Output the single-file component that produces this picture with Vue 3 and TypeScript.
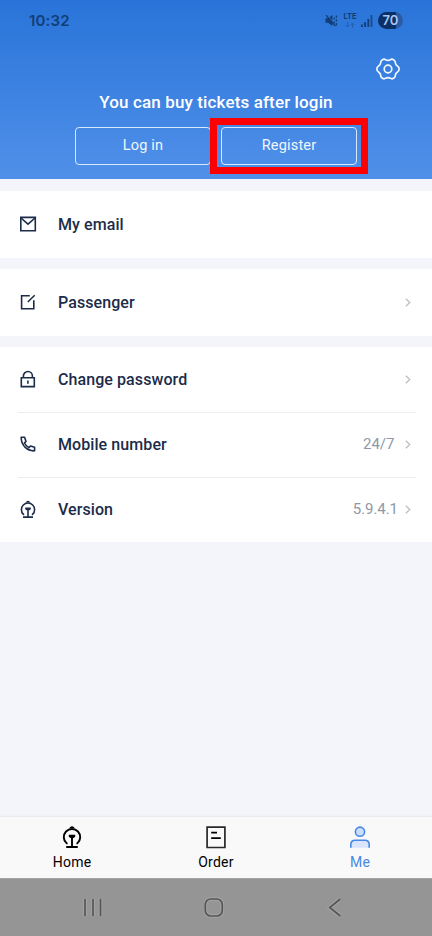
<script setup lang="ts">
import { ref } from 'vue'

type IconName = 'mail' | 'passenger' | 'lock' | 'phone' | 'train'

interface MenuItem {
  icon: IconName
  label: string
  value?: string
  arrow: boolean
}

const groups: MenuItem[][] = [
  [{ icon: 'mail', label: 'My email', arrow: false }],
  [{ icon: 'passenger', label: 'Passenger', arrow: true }],
  [
    { icon: 'lock', label: 'Change password', arrow: true },
    { icon: 'phone', label: 'Mobile number', value: '24/7 ', arrow: true },
    { icon: 'train', label: 'Version', value: '5.9.4.1', arrow: true },
  ],
]

const tabs = ['Home', 'Order', 'Me'] as const
const active = ref<(typeof tabs)[number]>('Me')
</script>

<template>
  <div class="screen">
    <header class="header">
      <div class="status">
        <span class="clock">10:32</span>
        <div class="indicators">
          <svg class="mute" width="13" height="13" viewBox="0 0 13 13">
            <path d="M.5 4.3h2.6L7.4 1v11L3.1 8.7H.5z" fill="currentColor" />
            <path d="M1.8 .6l9.4 11" stroke="#2d73d8" stroke-width="1" />
            <path d="M1 1.2l9.4 11M9.2 3.6v2M9.2 7.4v2M11.4 1.4v2.4M11.4 5.3v2.2M11.4 9v2.6" stroke="currentColor" stroke-width="1.3" fill="none" />
          </svg>
          <div class="lte">
            <span>LTE</span>
            <svg width="10" height="6" viewBox="0 0 10 6" fill="none" stroke="currentColor">
              <path d="M2.5 0v5M.5 3l2 2 2-2M7.5 6V1M5.5 3l2-2 2 2" />
            </svg>
          </div>
          <svg class="signal" width="12" height="12" viewBox="0 0 12 12" fill="currentColor">
            <path d="M0 9.5h1.8V12H0zM3.2 7H5v5H3.2zM6.4 4h1.8v8H6.4z" />
            <path d="M9.6 0h1.8v12H9.6z" opacity=".75" />
          </svg>
          <span class="battery">70</span>
        </div>
      </div>
      <svg class="settings" width="24" height="22" viewBox="0 0 24 22" fill="none" stroke="#f1f8ff" stroke-width="1.7" stroke-linejoin="round">
        <path d="M7.4 1.3Q8.6 1 9.6 1.8Q12 3 14.4 1.8Q15.4 1 16.6 1.3L18.5 2.5Q19.3 3.3 19.3 4.6Q19.5 6.9 21.5 8.1Q22.7 8.9 23 10V12Q22.7 13.1 21.5 13.9Q19.5 15.1 19.3 17.4Q19.3 18.7 18.5 19.5L16.6 20.7Q15.4 21 14.4 20.2Q12 19 9.6 20.2Q8.6 21 7.4 20.7L5.5 19.5Q4.7 18.7 4.7 17.4Q4.5 15.1 2.5 13.9Q1.3 13.1 1 12V10Q1.3 8.9 2.5 8.1Q4.5 6.9 4.7 4.6Q4.7 3.3 5.5 2.5Z" />
        <circle cx="12" cy="11" r="3.8" />
      </svg>
      <h1 class="title">You can buy tickets after login</h1>
      <div class="actions">
        <button class="action">Log in</button>
        <button class="action">Register</button>
        <i class="highlight"></i>
      </div>
    </header>

    <main class="content">
      <section v-for="(group, index) in groups" :key="index" class="group">
        <div v-for="item in group" :key="item.label" class="row">
          <svg class="row-icon" width="18" height="18" viewBox="0 0 18 18" fill="none" stroke="currentColor" stroke-width="1.6">
            <template v-if="item.icon === 'mail'">
              <path d="M1.8 2.4h14.5v13.3H1.8z" />
              <path d="M2 3l7 6.2L16 3" />
            </template>
            <path v-else-if="item.icon === 'passenger'" d="M10.8 2.7H2.6v13.1h12.2V7.2M8.8 9l6.9-6.8" />
            <template v-else-if="item.icon === 'lock'">
              <path d="M2.3 7.8h13v8.8h-13zM4.4 7.6V6a4.5 4.5 0 0 1 9 0v1.6" />
              <path d="M8.9 10.4v3.4" />
            </template>
            <path v-else-if="item.icon === 'phone'" d="M2.2 2.3H5.6L7 6.4 5.4 8Q6.9 11 9.9 12.6L11.5 11 15.6 12.3V15.8Q10.2 16.2 6 12.2Q2.1 8.2 2.2 2.3Z" stroke-linejoin="round" />
            <template v-else>
              <path d="M5.2 14.4H4.4A6.6 6.6 0 1 1 13.6 14.4H12.8M9 9.5v7.2M4 17.1h10" stroke-width="1.6" />
              <path d="M6.2 7.5h5.6v1.7L10.5 10.3H7.5L6.2 9.2zM6.4 2.6Q9-.9 11.6 2.6z" fill="currentColor" stroke="none" />
            </template>
          </svg>
          <span class="label">{{ item.label }}</span>
          <span v-if="item.value" class="value">{{ item.value }}</span>
          <svg v-if="item.arrow" class="arrow" width="6" height="9" viewBox="0 0 6 9" fill="none" stroke="#bfc1c6" stroke-width="1.4">
            <path d="M.8.7l4 3.8-4 3.8" />
          </svg>
        </div>
      </section>
    </main>

    <nav class="tabs">
      <button v-for="tab in tabs" :key="tab" class="tab" :class="{ active: tab === active }" @click="active = tab">
        <svg width="24" height="24" viewBox="0 0 24 24" fill="none" stroke="currentColor" stroke-width="2">
          <template v-if="tab === 'Home'">
            <path d="M7.6 18.4H6.7A8.2 8.2 0 1 1 17.3 18.4H16.4M12 11.5v10.4M6.2 22h11.6" stroke-width="1.9" />
            <path d="M8.8 9.7h6.4v2L13.6 13h-3.2L8.8 11.7zM9 3.4Q12-1 15 3.4z" fill="currentColor" stroke="none" />
          </template>
          <template v-else-if="tab === 'Order'">
            <path d="M3.1 2.1h17.8v20.4H3.1z" stroke="#292929" stroke-width="1.7" />
            <path d="M7.2 7.7h5.8M7.2 13.1h9.6" stroke-width="1.8" />
          </template>
          <template v-else>
            <circle cx="12" cy="6.7" r="4.6" fill="#cdddfc" stroke-width="1.6" />
            <path d="M2.8 22.8V19.7Q2.8 15.2 7.3 15.2h9.4Q21.2 15.2 21.2 19.7v3.1" fill="#d9e5fd" stroke-width="1.6" />
          </template>
        </svg>
        <span>{{ tab }}</span>
      </button>
    </nav>

    <footer class="system">
      <svg width="20" height="22" viewBox="0 0 20 22">
        <path class="halo" d="M2 2v17M10 2v17M17.5 2v17" />
        <path class="stroke" d="M2 2v17M10 2v17M17.5 2v17" />
      </svg>
      <svg width="20" height="22" viewBox="0 0 20 22">
        <rect class="halo" x="1.3" y="2" width="17" height="17" rx="5.5" />
        <rect class="stroke" x="1.3" y="2" width="17" height="17" rx="5.5" />
      </svg>
      <svg width="20" height="22" viewBox="0 0 20 22">
        <path class="halo" d="M15.3 2L4.7 10.5 15.3 19" />
        <path class="stroke" d="M15.3 2L4.7 10.5 15.3 19" />
      </svg>
    </footer>
  </div>
</template>

<style>
body {
  margin: 0;
}
</style>

<style scoped>
.screen {
  display: flex;
  flex-direction: column;
  width: 432px;
  height: 936px;
  overflow: hidden;
  background: #f3f5fa;
  font-family: Roboto, "Liberation Sans", sans-serif;
}

button {
  padding: 0;
  border: 0;
  background: none;
  font: inherit;
}

.header {
  display: flex;
  flex-direction: column;
  flex: none;
  align-items: center;
  height: 179px;
  background: linear-gradient(#2974d9, #5090e9);
}

.status {
  display: flex;
  align-items: center;
  justify-content: space-between;
  box-sizing: border-box;
  width: 100%;
  height: 41px;
  padding: 0 29px;
  color: #123e77;
}

.clock {
  font-family: Inter, sans-serif;
  font-size: 15px;
  font-weight: 600;
  letter-spacing: 0.15px;
}

.indicators {
  display: flex;
  align-items: center;
}

.mute {
  margin-right: 5px;
}

.lte {
  display: flex;
  flex-direction: column;
  align-items: center;
  width: 14px;
  margin-right: 4px;
  font: 700 7.5px/8px Inter, sans-serif;
}

.lte svg {
  margin-top: 1px;
  opacity: 0.4;
}

.signal {
  margin-right: 5px;
}

.battery {
  width: 25px;
  height: 17px;
  border-radius: 9px;
  background: linear-gradient(90deg, #0b3066 70%, #285ba3 70%);
  color: #a9c6ef;
  font: 600 13px/17px Inter, sans-serif;
  text-align: center;
}

.settings {
  flex: none;
  align-self: flex-end;
  margin: 17px 32px 0 0;
}

.title {
  margin: 12px 0 0;
  color: #fff;
  font-size: 17px;
  font-weight: 500;
  line-height: 20px;
  letter-spacing: 0.13px;
  white-space: nowrap;
}

.actions {
  position: relative;
  display: flex;
  gap: 10px;
  margin-top: 15px;
}

.action {
  box-sizing: border-box;
  width: 136px;
  height: 38px;
  padding-bottom: 1px;
  border: 1.5px solid #d7eafd;
  border-radius: 4px;
  color: #f0f7ff;
  font-size: 14.5px;
  letter-spacing: 0.2px;
}

.highlight {
  position: absolute;
  top: -9px;
  right: -11px;
  box-sizing: border-box;
  width: 158px;
  height: 56px;
  border: 7px solid #f00;
}

.content {
  display: flex;
  flex: 1;
  flex-direction: column;
  gap: 11px;
  padding-top: 12px;
}

.group {
  padding: 0 16px 0 18px;
  background: #fff;
}

.row {
  display: flex;
  align-items: center;
  box-sizing: border-box;
  height: 65px;
  padding-bottom: 1px;
  color: #1c2c49;
}

.row:only-child {
  height: 67px;
}

.row + .row {
  padding-bottom: 2px;
  border-top: 1px solid #ededef;
}

.row-icon {
  flex: none;
  margin-left: 1px;
}

.label {
  flex: 1;
  margin-left: 21px;
  font-size: 16px;
  font-weight: 500;
  letter-spacing: 0.08px;
}

.value {
  color: #8e98a8;
  font-size: 15px;
  letter-spacing: -0.05px;
  white-space: pre;
}

.arrow {
  margin: 0 5px 0 7px;
}

.tabs {
  display: grid;
  flex: none;
  grid-template-columns: repeat(3, 1fr);
  height: 61px;
  background: #f9f9f9;
  box-shadow: 0 -1px 2px rgba(0, 0, 0, 0.06);
}

.tab {
  display: flex;
  flex-direction: column;
  align-items: center;
  padding-top: 8px;
  color: #000;
  font-size: 14px;
  line-height: 18px;
  letter-spacing: 0.25px;
}

.tab span {
  margin-top: 4px;
}

.tab.active {
  color: #4688e4;
}

.system {
  display: flex;
  flex: none;
  justify-content: space-between;
  box-sizing: border-box;
  height: 58px;
  padding: 19px 87px 0 83px;
  background: #959595;
  box-shadow: inset 0 1px #a5a5a5;
}

.system svg {
  fill: none;
}

.halo {
  stroke: #a5a5a5;
  stroke-width: 3.6;
}

.stroke {
  stroke: #555;
  stroke-width: 1.7;
}
</style>
